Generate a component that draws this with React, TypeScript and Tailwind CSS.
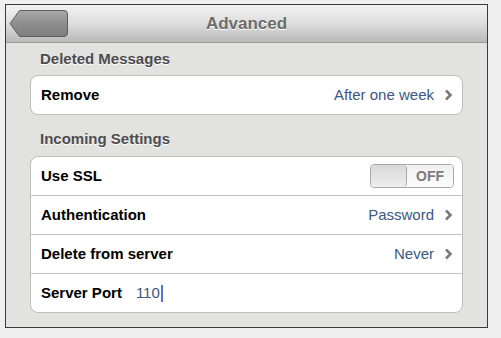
import React from 'react';

function Chevron() {
  return (
    <svg width="9" height="12" viewBox="0 0 9 12" className="ml-[10px]">
      <path d="M2 1.5 L6.5 6 L2 10.5" fill="none" stroke="#7b7b7b" strokeWidth="2.6" />
    </svg>
  );
}

function Row({ label, value, last }: { label: string; value?: React.ReactNode; last?: boolean }) {
  return (
    <div
      className={`flex items-center pl-[10px] pr-[9px] ${last ? 'h-[38px]' : 'h-[39px] border-b border-[#c3c3c7]'}`}
    >
      <span className="font-bold text-[15px] text-black">{label}</span>
      <span className="flex-1" />
      {value}
    </div>
  );
}

function Disclosure({ text }: { text: string }) {
  return (
    <span className="flex items-center text-[15px] text-[#3b5687]">
      {text}
      <Chevron />
    </span>
  );
}

function Toggle() {
  return (
    <div className="flex w-[84px] h-[24px] rounded-[4px] border border-[#a9a9a9] overflow-hidden mr-[-1px]">
      <div className="w-[36px] h-full bg-gradient-to-b from-[#d8d8d8] to-[#eeeeee] border-r border-[#a9a9a9] rounded-[4px]" />
      <div className="flex-1 flex items-center justify-center bg-gradient-to-b from-[#f0f0f0] to-[#fcfcfc] text-[14px] font-bold text-[#7c7c7c]">
        OFF
      </div>
    </div>
  );
}

export default function App() {
  return (
    <div
      className="w-[501px] h-[338px] bg-[#efefef] pt-[4px] pl-[5px]"
      style={{ fontFamily: '"Liberation Sans", Arial, sans-serif' }}
    >
      <div className="w-[483px] h-[324px] border border-[#3a3a3a] bg-[#e2e2e0] flex flex-col">
        {/* navigation bar */}
        <div className="relative h-[38px] flex items-center justify-center bg-gradient-to-b from-[#f2f2f2] via-[#dedede] to-[#b9b9b9] border-b border-[#9a9a9a]">
          <svg width="60" height="29" viewBox="0 0 60 29" className="absolute left-[3px] top-[4px]">
            <defs>
              <linearGradient id="bb" x1="0" y1="0" x2="0" y2="1">
                <stop offset="0" stopColor="#a9a9a9" />
                <stop offset="0.5" stopColor="#8e8e8e" />
                <stop offset="1" stopColor="#7e7e7e" />
              </linearGradient>
            </defs>
            <path
              d="M1 14.5 L10.5 1.5 L55 1.5 Q58.5 1.5 58.5 5 L58.5 24 Q58.5 27.5 55 27.5 L10.5 27.5 Z"
              fill="url(#bb)"
              stroke="#5e5e5e"
              strokeWidth="1"
            />
          </svg>
          <span className="font-bold text-[17px] text-[#6c6c6c] [text-shadow:0_1px_0_#ffffff]">Advanced</span>
        </div>

        <div className="flex-1 px-[24px]">
          <div className="h-[32px] flex items-center pl-[10px] pt-[1px] font-bold text-[15px] text-[#4c4c4c] [text-shadow:0_1px_0_#ffffff]">
            Deleted Messages
          </div>
          <div className="bg-white rounded-[8px] border border-[#bdbdbd]">
            <Row label="Remove" value={<Disclosure text="After one week" />} last />
          </div>

          <div className="h-[41px] flex items-center pl-[10px] pt-[7px] font-bold text-[15px] text-[#4c4c4c] [text-shadow:0_1px_0_#ffffff]">
            Incoming Settings
          </div>
          <div className="bg-white rounded-[8px] border border-[#bdbdbd]">
            <Row label="Use SSL" value={<Toggle />} />
            <Row label="Authentication" value={<Disclosure text="Password" />} />
            <Row label="Delete from server" value={<Disclosure text="Never" />} />
            <div className="flex items-center h-[38px] pl-[10px]">
              <span className="font-bold text-[15px] text-black">Server Port</span>
              <span className="ml-[14px] text-[15px] text-[#3b5687]">110</span>
              <span className="w-[2px] h-[17px] bg-[#4a7bd0] ml-[1px]" />
            </div>
          </div>
        </div>
      </div>
    </div>
  );
}
